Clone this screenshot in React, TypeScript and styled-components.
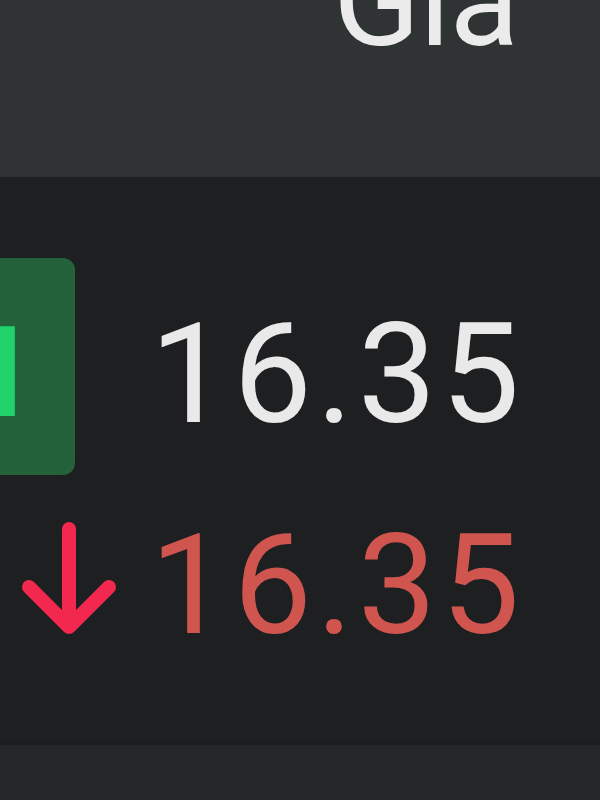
import React from 'react';
import styled, { createGlobalStyle } from 'styled-components';

const GlobalStyle = createGlobalStyle`
  html, body {
    margin: 0;
    padding: 0;
    background: #1e1f21;
    overflow: hidden;
  }
  body {
    font-family: Roboto, 'Noto Sans', sans-serif;
  }
`;

const Screen = styled.div`
  width: 600px;
  height: 800px;
  display: flex;
  flex-direction: column;
  overflow: hidden;
  background: #1e1f21;
`;

const Header = styled.div`
  height: 177px;
  flex: none;
  background: #2f3334;
  display: flex;
  justify-content: flex-end;
  align-items: flex-start;
  padding-right: 82px;
  overflow: hidden;
`;

const HeaderTitle = styled.span`
  font-size: 128px;
  line-height: 1;
  color: #ebebeb;
  margin-top: -63px;
  letter-spacing: -1px;
`;

const Body = styled.div`
  flex: 1;
  display: flex;
  flex-direction: column;
  padding-top: 81px;
`;

const Row = styled.div<{ $height: number }>`
  height: ${({ $height }) => $height}px;
  display: grid;
  grid-template-columns: 150px 1fr;
  align-items: center;
`;

const Badge = styled.div`
  width: 150px;
  height: 217px;
  margin-left: -75px;
  border-radius: 12px;
  background: #24623b;
  display: flex;
  align-items: center;
  justify-content: flex-end;
  padding-right: 50px;
  box-sizing: border-box;
  overflow: hidden;
`;

const BadgeText = styled.span`
  font-size: 127px;
  line-height: 1;
  font-weight: 500;
  color: #20d46b;
  margin-top: 12px;
`;

const ArrowCell = styled.div`
  display: flex;
  align-items: center;
  padding-left: 20px;
  margin-top: -8px;
`;

const Price = styled.span<{ $tone: 'flat' | 'down' }>`
  font-size: 140px;
  line-height: 1;
  letter-spacing: 4.5px;
  color: ${({ $tone }) => ($tone === 'down' ? '#d1554f' : '#e9e9ea')};
  margin-top: ${({ $tone }) => ($tone === 'down' ? '4px' : '14px')};
`;

const Footer = styled.div`
  height: 58px;
  flex: none;
  background: #23272a;
  border-top: 3px solid #1b1e20;
  box-sizing: border-box;
`;

const ArrowDown = () => (
  <svg width="98" height="116" viewBox="0 0 98 116" fill="none">
    <path
      d="M49 8 V106 M9 66 L49 106 L89 66"
      stroke="#f2284f"
      strokeWidth="14"
      strokeLinecap="round"
      strokeLinejoin="round"
    />
  </svg>
);

export default function App() {
  return (
    <Screen>
      <GlobalStyle />
      <Header>
        <HeaderTitle>Gia</HeaderTitle>
      </Header>
      <Body>
        <Row $height={217}>
          <Badge>
            <BadgeText>I</BadgeText>
          </Badge>
          <Price $tone="flat">16.35</Price>
        </Row>
        <Row $height={216}>
          <ArrowCell>
            <ArrowDown />
          </ArrowCell>
          <Price $tone="down">16.35</Price>
        </Row>
      </Body>
      <Footer />
    </Screen>
  );
}
